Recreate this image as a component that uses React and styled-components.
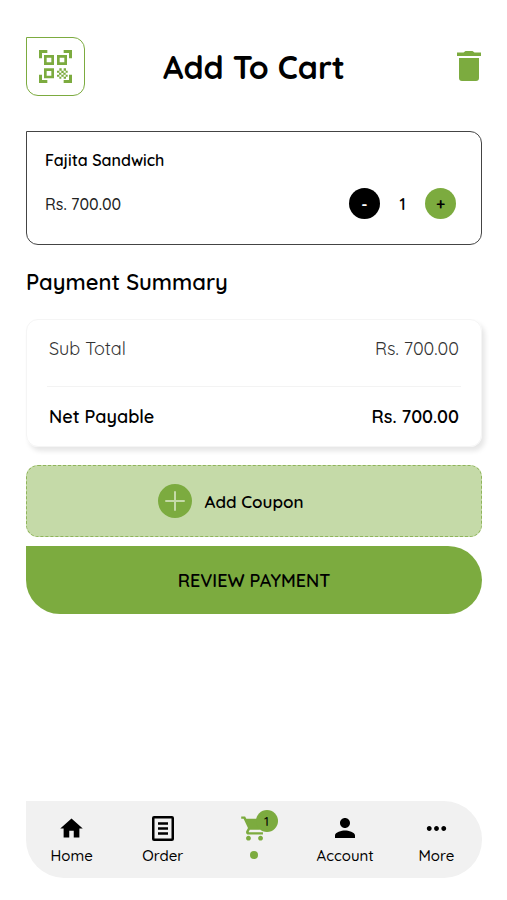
import React, { useState } from "react";
import styled, { createGlobalStyle } from "styled-components";
import { MdHome, MdMoreHoriz, MdPerson, MdShoppingCart } from "react-icons/md";

const formatPrice = (value) => `Rs. ${value.toFixed(2)}`;

const QrIcon = () => (
  <svg width="33" height="33" viewBox="0 0 99 99" aria-hidden="true">
    <g fill="none" stroke="currentColor">
      <path
        strokeWidth="9"
        d="M4.500 25V4.500H25M74 4.500h20.500V25M4.500 74v20.500H25M74 94.500h20.500V74"
      />
      <path
        strokeWidth="8"
        d="M19 19h22v22H19zM58 19h22v22H58zM19 59h22v22H19z"
      />
    </g>
    <path
      fill="currentColor"
      d="M61 55h7v7h-7zM74 55h7v7h-7zM54 62h7v6h-7zM67 62h7v7h-7zM80 62h6v6h-6zM60 68h7v6h-7zM73 68h7v6h-7zM54 74h7v6h-7zM67 74h7v6h-7zM80 74h6v6h-6zM61 80h6v6h-6zM74 80h7v6h-7z"
    />
  </svg>
);

const TrashIcon = () => (
  <svg width="24" height="30" viewBox="0 0 24 30" aria-hidden="true">
    <path
      fill="currentColor"
      d="M0 1.500h6.500l2-1.500h7l2 1.500H24V5H0zM2 7h20v20a3 3 0 0 1-3 3H5a3 3 0 0 1-3-3z"
    />
  </svg>
);

const OrderIcon = () => (
  <svg width="22" height="25" viewBox="0 0 22 25" aria-hidden="true">
    <g fill="none" stroke="currentColor" strokeWidth="2.500">
      <rect x="1.250" y="1.250" width="19.500" height="22.500" rx="0.800" />
      <path d="M6 7.500h10M6 12.500h10M6 17.500h10" />
    </g>
  </svg>
);

const PlusIcon = () => (
  <svg width="20" height="20" viewBox="0 0 20 20" aria-hidden="true">
    <path
      d="M10 1v18M1 10h18"
      fill="none"
      stroke="currentColor"
      strokeWidth="2"
      strokeLinecap="round"
    />
  </svg>
);

const App = () => {
  const [quantity, setQuantity] = useState(1);
  const total = formatPrice(quantity * 700);

  return (
    <>
      <GlobalStyle />
      <PageStyled>
        <HeaderStyled>
          <QrButton type="button" aria-label="Scan QR code">
            <QrIcon />
          </QrButton>
          <h1>Add To Cart</h1>
          <TrashButton type="button" aria-label="Empty cart">
            <TrashIcon />
          </TrashButton>
        </HeaderStyled>

        <main>
          <CartItem>
            <h2>Fajita Sandwich</h2>
            <div className="item-bottom">
              <p>{total}</p>
              <Stepper>
                <StepButton
                  type="button"
                  aria-label="Decrease quantity"
                  $dark
                  onClick={() => setQuantity(Math.max(1, quantity - 1))}
                >
                  -
                </StepButton>
                <span>{quantity}</span>
                <StepButton
                  type="button"
                  aria-label="Increase quantity"
                  onClick={() => setQuantity(quantity + 1)}
                >
                  +
                </StepButton>
              </Stepper>
            </div>
          </CartItem>

          <SectionTitle>Payment Summary</SectionTitle>
          <Summary>
            <SummaryRow>
              <dt>Sub Total</dt>
              <dd>{total}</dd>
            </SummaryRow>
            <SummaryRow $strong>
              <dt>Net Payable</dt>
              <dd>{total}</dd>
            </SummaryRow>
          </Summary>

          <CouponButton type="button">
            <span className="coupon-icon">
              <PlusIcon />
            </span>
            Add Coupon
          </CouponButton>
          <ReviewButton type="button">REVIEW PAYMENT</ReviewButton>
        </main>

        <BottomNav>
          <NavLink href="#home">
            <span className="nav-icon">
              <MdHome size={27} />
            </span>
            Home
          </NavLink>
          <NavLink href="#order">
            <span className="nav-icon">
              <OrderIcon />
            </span>
            Order
          </NavLink>
          <NavLink href="#cart" aria-label="Cart" $active>
            <span className="nav-icon">
              <MdShoppingCart size={29} />
              <Badge>{quantity}</Badge>
            </span>
            <ActiveDot />
          </NavLink>
          <NavLink href="#account">
            <span className="nav-icon">
              <MdPerson size={30} />
            </span>
            Account
          </NavLink>
          <NavLink href="#more">
            <span className="nav-icon">
              <MdMoreHoriz size={29} />
            </span>
            More
          </NavLink>
        </BottomNav>
      </PageStyled>
    </>
  );
};

const GlobalStyle = createGlobalStyle`
  * {
    box-sizing: border-box;
    margin: 0;
    padding: 0;
  }
  body {
    background-color: #fff;
    color: #000;
    font-family: Quicksand, Lato, sans-serif;
  }
  button {
    border: none;
    color: inherit;
    font-family: inherit;
    cursor: pointer;
  }
`;

const PageStyled = styled.div`
  display: flex;
  flex-direction: column;
  min-height: 100vh;
  padding: 37px 25px 22px 26px;
  main {
    flex: 1;
  }
`;

const HeaderStyled = styled.header`
  display: flex;
  align-items: center;
  justify-content: space-between;
  margin-bottom: 35px;
  h1 {
    font-size: 32px;
    font-weight: 700;
    line-height: 40px;
  }
`;

const QrButton = styled.button`
  display: flex;
  align-items: center;
  justify-content: center;
  width: 59px;
  height: 59px;
  border: 1px solid #7cab3f;
  border-radius: 0 12px 12px 12px;
  background-color: #fff;
  color: #7cab3f;
`;

const TrashButton = styled.button`
  display: flex;
  justify-content: flex-end;
  width: 59px;
  padding: 0 1px 2px 0;
  background: none;
  color: #7cab3f;
`;

const CartItem = styled.section`
  padding: 18px 25px 25px 18px;
  border: 1px solid #444;
  border-radius: 0 12px 12px 12px;
  h2 {
    font-size: 16px;
    font-weight: 600;
    line-height: 20px;
  }
  .item-bottom {
    display: flex;
    align-items: center;
    justify-content: space-between;
    margin-top: 18px;
  }
  p {
    color: #222;
    font-size: 16px;
    font-weight: 500;
    line-height: 20px;
  }
`;

const Stepper = styled.div`
  display: flex;
  align-items: center;
  span {
    width: 45px;
    font-size: 16px;
    font-weight: 600;
    text-align: center;
  }
`;

const StepButton = styled.button`
  width: 31px;
  height: 31px;
  border-radius: 50%;
  background-color: ${(props) => (props.$dark ? "#000" : "#7cab3f")};
  color: ${(props) => (props.$dark ? "#fff" : "#000")};
  font-size: 16px;
  font-weight: 600;
  line-height: 20px;
`;

const SectionTitle = styled.h2`
  margin: 22px 0;
  font-size: 22px;
  font-weight: 600;
  line-height: 30px;
`;

const Summary = styled.dl`
  padding: 0 20px;
  border: 1px solid #f5f5f5;
  border-radius: 12px;
  box-shadow: 3px 4px 5px rgba(0, 0, 0, 0.1);
`;

const SummaryRow = styled.div`
  display: flex;
  align-items: center;
  justify-content: space-between;
  height: ${(props) => (props.$strong ? "60px" : "66px")};
  padding: ${(props) => (props.$strong ? "0 2px" : "0 2px 8px")};
  border-top: ${(props) => (props.$strong ? "1px solid #f3f3f3" : "none")};
  color: ${(props) => (props.$strong ? "#000" : "#333")};
  font-size: 18px;
  font-weight: ${(props) => (props.$strong ? 600 : 400)};
  line-height: 24px;
`;

const CouponButton = styled.button`
  display: flex;
  align-items: center;
  justify-content: center;
  gap: 12px;
  width: 100%;
  height: 72px;
  margin-top: 18px;
  padding-right: 46px;
  border: 1px dashed #8fb55a;
  border-radius: 12px;
  background-color: #c5daa8;
  font-size: 17px;
  font-weight: 600;
  .coupon-icon {
    display: flex;
    align-items: center;
    justify-content: center;
    width: 34px;
    height: 34px;
    border-radius: 50%;
    background-color: #7cab3f;
    color: #c5daa8;
  }
`;

const ReviewButton = styled.button`
  display: block;
  width: 100%;
  height: 68px;
  margin-top: 9px;
  border-radius: 0 34px 34px 34px;
  background-color: #7cab3f;
  font-size: 18px;
  font-weight: 600;
`;

const BottomNav = styled.nav`
  display: flex;
  border-radius: 0 38px 38px 38px;
  background-color: #f1f1f1;
`;

const NavLink = styled.a`
  display: flex;
  flex: 1;
  flex-direction: column;
  align-items: center;
  gap: 3px;
  padding: 12px 0;
  color: #000;
  font-size: 15px;
  font-weight: 500;
  line-height: 20px;
  text-decoration: none;
  .nav-icon {
    position: relative;
    display: flex;
    align-items: center;
    height: 30px;
    color: ${(props) => (props.$active ? "#7cab3f" : "#000")};
  }
`;

const Badge = styled.span`
  position: absolute;
  top: -3px;
  right: -9px;
  width: 22px;
  height: 22px;
  border-radius: 50%;
  background-color: #7cab3f;
  color: #000;
  font-size: 13px;
  line-height: 22px;
  text-align: center;
`;

const ActiveDot = styled.span`
  width: 8px;
  height: 8px;
  margin-top: 5px;
  border-radius: 50%;
  background-color: #7cab3f;
`;

export default App;
